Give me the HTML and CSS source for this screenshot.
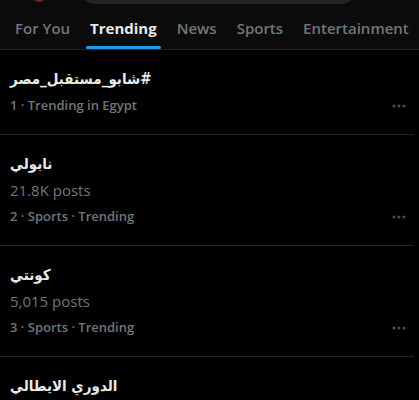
FILE: index.html
```html
<!DOCTYPE html>
<html lang="en">

<head>
    <meta charset="UTF-8">
    <meta name="viewport" content="width=device-width, initial-scale=1.0">
    <title>Explore</title>
    <link rel="stylesheet" href="styles.css">
</head>

<body>
    <div class="header">
        <div class="top-row">
            <div class="avatar"></div>
            <div class="search-bar"></div>
        </div>
        <div class="tabs">
            <div class="tab">For You</div>
            <div class="tab active">Trending<span class="underline"></span></div>
            <div class="tab">News</div>
            <div class="tab">Sports</div>
            <div class="tab">Entertainment</div>
        </div>
    </div>

    <div class="trend">
        <div class="trend-info">
            <div class="trend-title" dir="rtl">#شابو_مستقبل_مصر</div>
            <div class="trend-meta">1 · Trending in Egypt</div>
        </div>
        <svg class="more" width="14" height="4" viewBox="0 0 14 4"><circle cx="2" cy="2" r="1.5"/><circle cx="7" cy="2" r="1.5"/><circle cx="12" cy="2" r="1.5"/></svg>
    </div>
    <div class="trend">
        <div class="trend-info">
            <div class="trend-title" dir="rtl">نابولي</div>
            <div class="trend-posts">21.8K posts</div>
            <div class="trend-meta">2 · Sports · Trending</div>
        </div>
        <svg class="more" width="14" height="4" viewBox="0 0 14 4"><circle cx="2" cy="2" r="1.5"/><circle cx="7" cy="2" r="1.5"/><circle cx="12" cy="2" r="1.5"/></svg>
    </div>
    <div class="trend">
        <div class="trend-info">
            <div class="trend-title" dir="rtl">كونتي</div>
            <div class="trend-posts">5,015 posts</div>
            <div class="trend-meta">3 · Sports · Trending</div>
        </div>
        <svg class="more" width="14" height="4" viewBox="0 0 14 4"><circle cx="2" cy="2" r="1.5"/><circle cx="7" cy="2" r="1.5"/><circle cx="12" cy="2" r="1.5"/></svg>
    </div>
    <div class="trend last">
        <div class="trend-info">
            <div class="trend-title" dir="rtl">الدوري الايطالي</div>
        </div>
    </div>
</body>

</html>
```

FILE: styles.css
```css
body {
    margin: 0;
    background-color: #000;
    color: #e7e9ea;
    font-family: "Open Sans", "DejaVu Sans", sans-serif;
    overflow: hidden;
    height: 400px;
}

.header {
    background-color: #0b0b0c;
    border-bottom: 1px solid #202326;
}

.top-row {
    display: flex;
    height: 4px;
    overflow: hidden;
}

.avatar {
    width: 14px;
    height: 14px;
    border-radius: 50%;
    background: #6b2a1c;
    margin: -12px 0 0 32px;
}

.search-bar {
    width: 280px;
    height: 36px;
    margin: -32px 0 0 32px;
    border-radius: 18px;
    background-color: #202327;
}

.tabs {
    display: flex;
    height: 42px;
    padding: 3px 0 0 15px;
    gap: 20px;
}

.tab {
    position: relative;
    font-size: 15px;
    font-weight: 600;
    color: #71767b;
    line-height: 42px;
    white-space: nowrap;
}

.tab.active {
    color: #e7e9ea;
    font-weight: 700;
}

.underline {
    position: absolute;
    left: -4px;
    right: -4px;
    bottom: 0;
    height: 3px;
    border-radius: 2px;
    background: #1d9bf0;
}

.trend {
    display: flex;
    justify-content: space-between;
    align-items: flex-end;
    padding: 16px 8px 16px 10px;
    margin-right: 5px;
    border-bottom: 1px solid #202326;
}

.trend.last {
    border-bottom: none;
}

.trend-info {
    display: flex;
    flex-direction: column;
    align-items: flex-start;
}

.trend-title {
    font-family: "DejaVu Sans Condensed", "DejaVu Sans", sans-serif;
    font-size: 15px;
    font-weight: 700;
    line-height: 26px;
}

.trend-posts {
    font-size: 15px;
    color: #71767b;
    line-height: 26px;
}

.trend-meta {
    font-size: 13px;
    font-weight: 600;
    color: #71767b;
    line-height: 26px;
}

.more {
    fill: #4b4f53;
    margin-bottom: 10px;
}
```
